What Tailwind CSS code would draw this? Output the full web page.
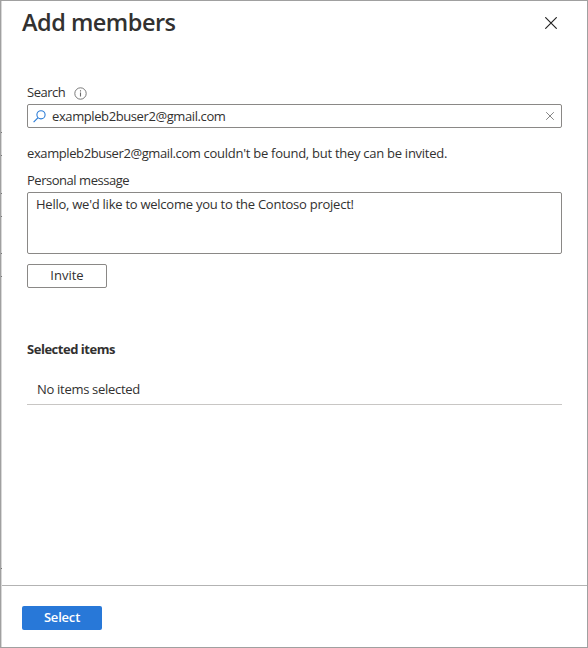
<!DOCTYPE html>
<html lang="en">
<head>
<meta charset="utf-8">
<title>Add members</title>
<script src="https://cdn.jsdelivr.net/npm/@tailwindcss/browser@4"></script>
</head>
<body class="bg-white font-['Open_Sans','Noto_Sans',sans-serif] text-[13px] leading-5 text-[#323130]">
<div class="relative flex h-[648px] w-[588px] flex-col overflow-hidden border border-[#a0a0a0] bg-white">
  <div class="absolute inset-y-0 left-0 w-px bg-[#d8d8d8]">
    <i class="absolute top-[131px] h-px w-px bg-[#777]"></i>
    <i class="absolute top-[154px] h-px w-px bg-[#777]"></i>
    <i class="absolute top-[192px] h-px w-px bg-[#777]"></i>
    <i class="absolute top-[215px] h-px w-px bg-[#777]"></i>
    <i class="absolute top-[252px] h-px w-px bg-[#777]"></i>
    <i class="absolute top-[275px] h-px w-px bg-[#777]"></i>
    <i class="absolute top-[567px] h-px w-px bg-[#777]"></i>
  </div>
  <header class="flex h-[81px] items-start justify-between pt-[5px] pr-[30px] pl-[21px]">
    <h1 class="text-[23.5px] leading-8 font-semibold tracking-[-0.5px]"><span>Add members</span></h1>
    <svg class="mt-[11px] h-[12px] w-[12px]" viewBox="0 0 12 12" fill="none" stroke="#222" stroke-width="1.15"><path d="M.3.3l11.4 11.4M11.7.3L.3 11.7"/></svg>
  </header>
  <main class="flex flex-1 flex-col pr-[25px] pl-[26px]">
    <div class="flex h-[22px] items-start gap-[9px] leading-5"><span class="tracking-[-0.47px]">Search</span>
      <svg class="mt-[5px] h-[13px] w-[13px]" viewBox="0 0 13 13" fill="none" stroke="#6a6a6a"><circle cx="6.5" cy="6.5" r="5.7" stroke-width=".9"/><path d="M6.5 5.5v4M6.5 3.2v1.2" stroke-width="1.1"/></svg>
    </div>
    <div class="flex h-6 items-center rounded-[2px] border border-[#8a8886] pr-[7px] pl-[5px]">
      <svg class="h-[13px] w-[13px]" viewBox="0 0 13 13" fill="none" stroke="#2b7cd6" stroke-width="1.1"><circle cx="8" cy="4.8" r="4.1"/><path d="M5.1 7.7L.6 12.2"/></svg>
      <span class="ml-[6px] tracking-[-0.4px]">exampleb2buser2@gmail.com</span>
      <svg class="ml-auto h-[8px] w-[8px]" viewBox="0 0 8 8" fill="none" stroke="#777" stroke-width=".9"><path d="M.2.2l7.6 7.6M7.8.2L.2 7.8"/></svg>
    </div>
    <p class="mt-[15px] tracking-[-0.32px]"><span class="tracking-[-0.4px]">exampleb2buser2@gmail.com</span><span class="tracking-[-0.27px]"> couldn't be found, but they can be invited.</span></p>
    <p class="mt-[7px] tracking-[-0.47px]"><span>Personal message</span></p>
    <div class="mt-[2px] h-[62px] rounded-[2px] border border-[#8a8886] px-2 pt-px tracking-[-0.25px]"><span>Hello, we'd like to welcome you to the Contoso project!</span></div>
    <button class="mt-[10px] h-6 w-20 rounded-[2px] border border-[#8a8886] pb-[2px] leading-5 font-medium"><span>Invite</span></button>
    <h2 class="mt-[51px] font-bold tracking-[-0.47px]"><span>Selected items</span></h2>
    <div class="mt-[20px] h-[26px] border-b border-[#c8c6c4] pl-[10px] tracking-[-0.3px]"><span>No items selected</span></div>
  </main>
  <footer class="h-[62px] border-t border-[#b3b3b3] pt-5 pl-[21px]">
    <button class="h-6 w-20 rounded-[2px] bg-[#2878d8] pb-[2px] leading-[22px] font-semibold tracking-[-0.2px] text-white"><span>Select</span></button>
  </footer>
</div>
</body>
</html>
